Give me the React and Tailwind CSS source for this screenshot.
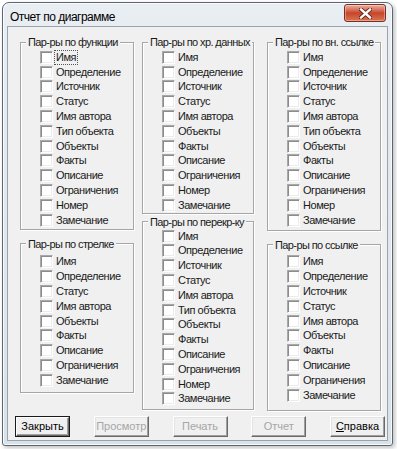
import React from "react";

const groups = [
  [
    { title: "Пар-ры по функции", mt: "mt-0", pt: "pt-[1px]", pb: "pb-[1px]", focusFirst: true,
      items: ["Имя", "Определение", "Источник", "Статус", "Имя автора", "Тип объекта", "Объекты", "Факты", "Описание", "Ограничения", "Номер", "Замечание"] },
    { title: "Пар-ры по стрелке", mt: "mt-[7px]", pt: "pt-[4px]", pb: "pb-[4px]",
      items: ["Имя", "Определение", "Статус", "Имя автора", "Объекты", "Факты", "Описание", "Ограничения", "Замечание"] },
  ],
  [
    { title: "Пар-ры по хр. данных", mt: "mt-0", pt: "pt-[1px]", pb: "pb-0",
      items: ["Имя", "Определение", "Источник", "Статус", "Имя автора", "Объекты", "Факты", "Описание", "Ограничения", "Номер", "Замечание"] },
    { title: "Пар-ры по перекр-ку", mt: "mt-[1px]", pt: "pt-0", pb: "pb-[3px]",
      items: ["Имя", "Определение", "Источник", "Статус", "Имя автора", "Тип объекта", "Объекты", "Факты", "Описание", "Ограничения", "Номер", "Замечание"] },
  ],
  [
    { title: "Пар-ры по вн. ссылке", mt: "mt-0", pt: "pt-[1px]", pb: "pb-[2px]",
      items: ["Имя", "Определение", "Источник", "Статус", "Имя автора", "Тип объекта", "Объекты", "Факты", "Описание", "Ограничения", "Номер", "Замечание"] },
    { title: "Пар-ры по ссылке", mt: "mt-[7px]", pt: "pt-[3px]", pb: "pb-[7px]",
      items: ["Имя", "Определение", "Источник", "Статус", "Имя автора", "Объекты", "Факты", "Описание", "Ограничения", "Замечание"] },
  ],
];

const colClasses = ["ml-[12px] w-[114px]", "ml-[8px] w-[112px]", "ml-[13px] w-[114px]"];

function Check({ label, focus }) {
  return (
    <div className="flex items-center h-[14.8px] pl-[19px]">
      <span className="w-[13px] h-[13px] shrink-0 bg-white border border-t-[#a8a8a8] border-l-[#a8a8a8] border-r-white border-b-white shadow-[inset_1px_1px_0_#8c8c8c,inset_-1px_-1px_0_#ececec]" />
      <span
        className={
          focus
            ? "ml-[2px] px-[1px] leading-[13px] whitespace-nowrap tracking-[-0.45px] text-[#1a1a1a] outline outline-1 outline-dotted outline-[#555]"
            : "ml-[2px] px-[1px] leading-[13px] whitespace-nowrap tracking-[-0.45px] text-[#1a1a1a]"
        }
      >
        {label}
      </span>
    </div>
  );
}

function Group({ g }) {
  return (
    <fieldset
      className={`${g.mt} ${g.pt} ${g.pb} border border-[#a6a6a6] shadow-[inset_1px_1px_0_#fff,1px_1px_0_#fff]`}
    >
      <legend className="ml-[5px] px-[2px] leading-[14px] bg-[#f0f0f0] whitespace-nowrap tracking-[-0.6px] text-[#1a1a1a]">
        {g.title}
      </legend>
      {g.items.map((it, i) => (
        <Check key={i} label={it} focus={g.focusFirst && i === 0} />
      ))}
    </fieldset>
  );
}

function Btn({ children, def, disabled }) {
  if (def) {
    return (
      <div className="w-[55px] h-[21px] border border-[#1a1a1a] bg-[#f0f0f0]">
        <div className="w-full h-full flex items-center justify-center border border-t-white border-l-white border-r-[#696969] border-b-[#696969] shadow-[inset_-1px_-1px_0_#a0a0a0]">
          {children}
        </div>
      </div>
    );
  }
  return (
    <div className="w-[55px] h-[21px] flex items-center justify-center bg-[#f0f0f0] border border-t-white border-l-white border-r-[#696969] border-b-[#696969] shadow-[inset_-1px_-1px_0_#a0a0a0,inset_1px_1px_0_#e3e3e3]">
      <span className={disabled ? "text-[#a6a6a6]" : "text-black"}>{children}</span>
    </div>
  );
}

export default function App() {
  return (
    <div className="w-[397px] h-[449px] bg-white overflow-hidden font-['Liberation_Sans',Arial,sans-serif] text-[11px] text-black">
      <div className="ml-[2px] mt-[2px] w-[391px] h-[444px] rounded-t-[7px] rounded-b-[3px] border border-[#5d6673] bg-gradient-to-b from-[#e9eef3] via-[#e1e7ee] to-[#d9e1e9] shadow-[inset_0_0_0_1px_rgba(255,255,255,0.75),2px_2px_4px_rgba(0,0,0,0.25)] flex flex-col">
        <div className="h-[23px] flex justify-between items-start">
          <div className="pl-[7px] pt-[6px] leading-[16px] text-[12px] tracking-[-0.5px] text-black">
            Отчет по диаграмме
          </div>
          <div className="mr-[6px] mt-[1px] w-[42px] h-[18px] rounded-[3px] border border-[#7a2e22] bg-gradient-to-b from-[#eab0a2] via-[#c8452b] to-[#d8744f] shadow-[inset_0_0_0_1px_rgba(255,255,255,0.35)] flex items-center justify-center">
            <svg width="13" height="11" viewBox="0 0 13 11">
              <path d="M2 1.5 L11 9.5 M11 1.5 L2 9.5" stroke="#5a1a10" strokeWidth="4" strokeLinecap="square" />
              <path d="M2 1.5 L11 9.5 M11 1.5 L2 9.5" stroke="#ffffff" strokeWidth="2.4" strokeLinecap="square" />
            </svg>
          </div>
        </div>
        <div className="mx-[4px] mb-[4px] flex-1 border border-[#98a4b2] bg-[#f0f0f0] flex flex-col">
          <div className="pt-[8px] flex items-start">
            {groups.map((col, ci) => (
              <div key={ci} className={`${colClasses[ci]} flex flex-col`}>
                {col.map((g, gi) => (
                  <Group key={gi} g={g} />
                ))}
              </div>
            ))}
          </div>
          <div className="mt-auto pb-[3px] pl-[7px] pr-[2px] flex justify-between">
            <Btn def>Закрыть</Btn>
            <Btn disabled>Просмотр</Btn>
            <Btn disabled>Печать</Btn>
            <Btn disabled>Отчет</Btn>
            <Btn>
              <span className="underline">С</span>правка
            </Btn>
          </div>
        </div>
      </div>
    </div>
  );
}
